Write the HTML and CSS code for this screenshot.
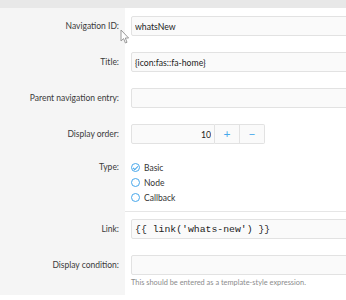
FILE: index.html
```html
<!DOCTYPE html>
<html lang="en">
<head>
        <meta charset="UTF-8">
        <meta name="viewport" content="width=device-width, initial-scale=1.0">
        <title>Navigation entry</title>
        <link rel="stylesheet" href="styles.css">
</head>
<body>
        <div class="topbar"></div>
        <form class="form">
                <div class="row">
                        <label class="label">Navigation ID:</label>
                        <div class="field"><input class="input" type="text" value="whatsNew"></div>
                </div>
                <div class="row">
                        <label class="label">Title:</label>
                        <div class="field"><input class="input" type="text" value="{icon:fas::fa-home}"></div>
                </div>
                <div class="row">
                        <label class="label">Parent navigation entry:</label>
                        <div class="field"><input class="input" type="text" value=""></div>
                </div>
                <div class="row">
                        <label class="label">Display order:</label>
                        <div class="field">
                                <div class="spinbox">
                                        <input class="input number" type="text" value="10">
                                        <span class="spin">+</span>
                                        <span class="spin">&minus;</span>
                                </div>
                        </div>
                </div>
                <div class="row row-radios">
                        <label class="label">Type:</label>
                        <div class="field">
                                <div class="radio checked"><span class="dot"></span>Basic</div>
                                <div class="radio"><span class="dot"></span>Node</div>
                                <div class="radio"><span class="dot"></span>Callback</div>
                        </div>
                </div>
                <div class="row row-sep">
                        <label class="label">Link:</label>
                        <div class="field"><input class="input code" type="text" value="{{ link('whats-new') }}"></div>
                </div>
                <div class="row">
                        <label class="label">Display condition:</label>
                        <div class="field">
                                <input class="input code" type="text" value="">
                                <p class="hint">This should be entered as a template-style expression.</p>
                        </div>
                </div>
        </form>
        <svg class="cursor" width="10" height="16" viewBox="0 0 10 16">
                <path d="M1 1 L1 12 L3.6 9.6 L5.4 14 L7 13.3 L5.3 9 L8.6 9 Z" fill="#fff" stroke="#9a9a9a" stroke-width="1"/>
        </svg>
</body>
</html>
```

FILE: styles.css
```css
* {
        margin: 0;
        padding: 0;
        box-sizing: border-box;
}

html, body {
        overflow: hidden;
}

body {
        font-family: Lato, "Noto Sans", sans-serif;
        font-size: 8.5px;
        color: #3a3a3a;
        background-color: #fff;
        position: relative;
}

.topbar {
        height: 8px;
        background-color: #e8e8e8;
}

.row {
        display: grid;
        grid-template-columns: 125px 1fr;
}

.label {
        background-color: #f5f5f5;
        text-align: right;
        padding: 8px 6px 8px 0;
        line-height: 20px;
}

.field {
        padding: 8px 0 8px 6px;
}

.input {
        display: block;
        width: 260px;
        height: 20px;
        padding: 0 3px;
        border: 1px solid #e2e2e2;
        border-radius: 2px;
        background-color: #fafafa;
        font-family: inherit;
        font-size: 8.7px;
        color: #222;
        outline: none;
}

.input.code {
        font-family: "Liberation Mono", monospace;
        font-size: 9.8px;
}

.spinbox {
        display: flex;
        width: 135px;
}

.input.number {
        width: 84px;
        text-align: right;
        border-radius: 2px 0 0 2px;
}

.spin {
        width: 25px;
        height: 20px;
        line-height: 18px;
        text-align: center;
        border: 1px solid #e2e2e2;
        border-left: none;
        background-color: #fafafa;
        color: #47a7eb;
        font-size: 12px;
}

.spin:last-child {
        border-radius: 0 2px 2px 0;
}

.row-radios .label {
        padding-top: 8px;
        line-height: 15px;
}

.row-radios .field {
        padding: 8px 0 6px 6px;
}

.radio {
        display: flex;
        align-items: center;
        height: 15px;
        color: #333;
}

.dot {
        width: 9px;
        height: 9px;
        border: 1px solid #47a7eb;
        border-radius: 50%;
        margin-right: 4px;
        position: relative;
}

.checked .dot::after {
        content: "";
        position: absolute;
        left: 2px;
        top: 1px;
        width: 2px;
        height: 4px;
        border: solid #47a7eb;
        border-width: 0 1px 1px 0;
        transform: rotate(45deg);
}

.row-sep .field {
        border-top: 1px solid #e6e6e6;
        padding-top: 7px;
}

.hint {
        font-size: 7.4px;
        color: #8c8c8c;
        margin-top: 3px;
}

.cursor {
        position: absolute;
        left: 120px;
        top: 29px;
}
```
